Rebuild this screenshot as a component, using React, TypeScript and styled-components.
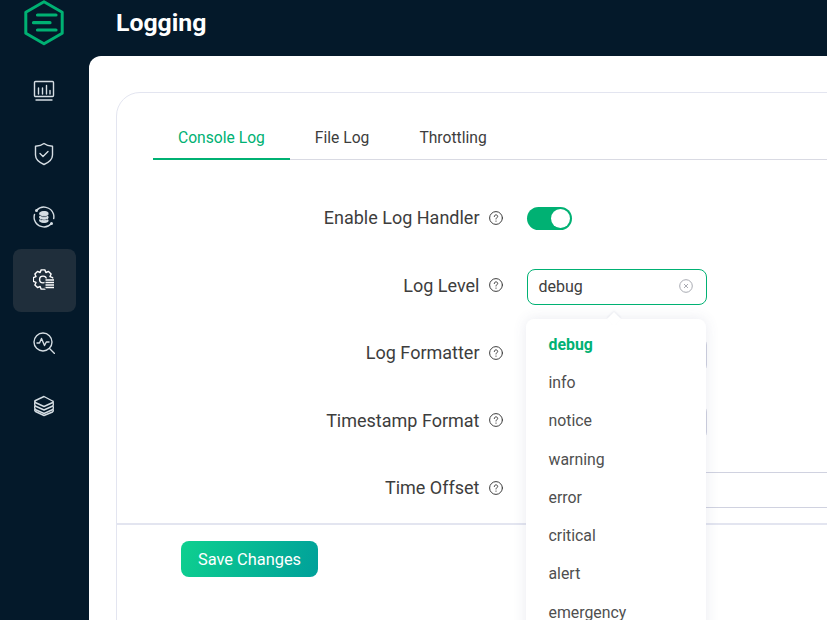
import React from 'react';
import styled, { createGlobalStyle } from 'styled-components';

const Global = createGlobalStyle`
  html, body { margin: 0; padding: 0; height: 620px; overflow: hidden; background: #04192a; }
  body { font-family: Roboto, "Liberation Sans", sans-serif; }
  #root { height: 620px; }
  * { box-sizing: border-box; }
`;

const Shell = styled.div`
  display: flex;
  width: 827px;
  height: 620px;
  overflow: hidden;
  background: #04192a;
`;

const Sidebar = styled.nav`
  width: 89px;
  flex: none;
  display: flex;
  flex-direction: column;
  align-items: center;
`;

const LogoWrap = styled.div`
  height: 49px;
  margin-bottom: 10px;
  display: flex;
  align-items: flex-start;
  justify-content: center;
`;

const NavItem = styled.div<{ $active?: boolean }>`
  width: 63px;
  height: 63px;
  margin-bottom: 0.2px;
  padding-right: 1px;
  border-radius: 8px;
  display: flex;
  align-items: center;
  justify-content: center;
  background: ${p => (p.$active ? '#1f2e3b' : 'transparent')};
  color: ${p => (p.$active ? '#ffffff' : '#d5dde3')};
`;

const Main = styled.main`
  flex: 1;
  min-width: 0;
  display: flex;
  flex-direction: column;
`;

const Header = styled.header`
  height: 56px;
  flex: none;
  padding: 8px 0 0 27px;
`;

const Title = styled.h1`
  margin: 0;
  font-size: 24.8px;
  line-height: 30px;
  font-weight: 700;
  color: #fff;
`;

const Content = styled.div`
  flex: 1;
  background: #fff;
  border-top-left-radius: 12px;
  padding: 36px 0 0 27px;
  min-width: 0;
`;

const Card = styled.section`
  width: 800px;
  height: 600px;
  border: 1px solid #e3e5f0;
  border-radius: 24px 0 0 0;
  position: relative;
`;

const TabBar = styled.div`
  display: flex;
  margin: 20px 0 0 36px;
  height: 47px;
  border-bottom: 1px solid #d9dae3;
  font-size: 15.65px;
`;

const Tab = styled.div<{ $active?: boolean }>`
  padding: 4px 25px 0;
  height: 47px;
  display: flex;
  align-items: center;
  color: ${p => (p.$active ? '#00b173' : '#3d3d3d')};
  border-bottom: 2px solid ${p => (p.$active ? '#00b173' : 'transparent')};
`;

const Form = styled.div`
  height: 365px;
  padding-top: 24px;
  display: flex;
  flex-direction: column;
  border-bottom: 2px solid #e3e5f0;
`;

const Row = styled.div`
  height: 67.5px;
  display: flex;
  align-items: center;
  flex: none;
`;

const Label = styled.label`
  width: 362.5px;
  text-align: right;
  font-size: 18px;
  color: #3d3d3d;
  flex: none;
`;

const Help = styled.span`
  width: 47px;
  flex: none;
  display: flex;
  padding-left: 9px;
  color: #3d3d3d;
`;

const Toggle = styled.div`
  width: 45px;
  height: 23px;
  margin-top: 2px;
  border-radius: 12px;
  background: #00b173;
  position: relative;
`;

const Knob = styled.span`
  position: absolute;
  right: 2px;
  top: 2px;
  width: 19px;
  height: 19px;
  border-radius: 50%;
  background: #fff;
`;

const Select = styled.div<{ $focus?: boolean }>`
  width: 180px;
  height: 36px;
  margin-top: 4px;
  border: 1px solid ${p => (p.$focus ? '#00b173' : '#d0d2e0')};
  border-radius: 8px;
  display: flex;
  align-items: center;
  justify-content: space-between;
  padding: 0 13px 2px 11px;
  font-size: 16px;
  color: #3d3d3d;
  background: #fff;
`;

const OffsetInput = styled.div`
  flex: 1;
  height: 36px;
  margin-top: 4px;
  border-top: 1px solid #d0d2e0;
  border-bottom: 1px solid #d0d2e0;
`;

const Footer = styled.div`
  padding: 16px 0 0 64px;
`;

const SaveButton = styled.button`
  width: 137px;
  height: 36px;
  border: 0;
  border-radius: 8px;
  background: linear-gradient(110deg, #0ed08f 0%, #00a09a 100%);
  color: #fff;
  font: 400 16.4px Roboto, "Liberation Sans", sans-serif;
  padding: 0;
`;

const Dropdown = styled.div`
  position: absolute;
  left: 409px;
  top: 226px;
  width: 180px;
  height: 320px;
  background: #fff;
  border-radius: 8px;
  box-shadow: 0 0 14px rgba(70, 80, 130, 0.12);
  padding: 6px 0;
`;

const Arrow = styled.span`
  position: absolute;
  left: 83px;
  top: -5px;
  width: 10px;
  height: 10px;
  background: #fff;
  transform: rotate(45deg);
  box-shadow: -1px -1px 2px rgba(70, 80, 130, 0.08);
`;

const Option = styled.div<{ $selected?: boolean }>`
  height: 38.3px;
  display: flex;
  align-items: center;
  padding-left: 22.5px;
  font-size: 15.85px;
  font-weight: ${p => (p.$selected ? 700 : 400)};
  color: ${p => (p.$selected ? '#00b173' : '#4f4f4f')};
`;

const ic = { fill: 'none', stroke: 'currentColor', strokeWidth: 1.4, strokeLinecap: 'round', strokeLinejoin: 'round' } as const;

const Logo = () => (
  <svg width="42" height="46" viewBox="0 0 42 46" fill="none" stroke="#00b173">
    <path d="M20 1.8 38.2 12.2v21L20 43.800 1.800 33.200v-21Z" strokeWidth="3" strokeLinejoin="round" />
    <path d="M13.500 15h18.500M9.500 22.700h16.500M13.500 30h18.500" strokeWidth="3.200" strokeLinecap="round" />
  </svg>
);

const MonitorIcon = () => (
  <svg width="22" height="22" viewBox="0 0 22 22" {...ic}>
    <rect x="1.500" y="1.500" width="19" height="15" rx="1" />
    <path d="M3 20h16M5.500 14V8M9.500 14V8M13.500 14V5.500M17 14v-3.500" />
  </svg>
);

const ShieldIcon = () => (
  <svg width="22" height="24" viewBox="0 0 22 24" {...ic}>
    <path d="M11 1.500c2 1.600 5 2.500 8.500 2.800v8.700c0 4.500-4 7.500-8.500 9.500C6.500 20.500 2.500 17.500 2.500 13V4.300C6 4 9 3.100 11 1.500Z" />
    <path d="m7 11.500 3 3 5-5" />
  </svg>
);

const SyncIcon = () => (
  <svg width="22" height="22" viewBox="0 0 22 22" {...ic}>
    <path d="M3.500 4.500A10 10 0 0 1 20.500 8M18.500 17.500A10 10 0 0 1 1.500 14M1.500 8.500A10 10 0 0 0 1.500 14M20.500 8a10 10 0 0 1 .2 4.500" />
    <path d="M3.500 4.500v.100M18.500 17.500v.100" strokeWidth="3" />
    <path d="M7 6.500c2-1.400 6-1.400 8 0v2.300c-2 1.300-6 1.300-8 0ZM7 10.300c2 1.300 6 1.300 8 0v2c-2 1.300-6 1.300-8 0ZM7 13.800c2 1.300 6 1.300 8 0v1.700c-2 1.300-6 1.300-8 0Z" fill="currentColor" strokeWidth="1" />
  </svg>
);

const gearPath = (() => {
  const pts: string[] = [];
  const teeth = 8;
  for (let i = 0; i < teeth; i++) {
    const a = (i / teeth) * Math.PI * 2 - Math.PI / 2;
    const step = (Math.PI * 2) / teeth;
    [
      [7.6, -0.5],
      [9.8, -0.24],
      [9.8, 0.24],
      [7.6, 0.5],
    ].forEach(([r, f]) => {
      const t = a + f * step;
      pts.push(`${(10 + r * Math.cos(t)).toFixed(2)} ${(10.5 + r * Math.sin(t)).toFixed(2)}`);
    });
  }
  return `M${pts.join('L')}Z`;
})();

const GearIcon = () => (
  <svg width="22" height="22" viewBox="0 0 22 22" {...ic}>
    <path d={gearPath} />
    <circle cx="10" cy="10.500" r="3.400" />
    <rect x="11.500" y="9.500" width="10" height="10.500" fill="#1f2e3b" stroke="none" />
    <path d="M12.500 11h8.500M12.500 13.500h8.500M12.500 16h8.500M12.500 18.500h8.500" strokeWidth="1.500" strokeLinecap="butt" />
  </svg>
);

const SearchPulseIcon = () => (
  <svg width="22" height="22" viewBox="0 0 22 22" {...ic}>
    <circle cx="10" cy="10" r="9" />
    <path d="m16.500 16.500 5 5" />
    <path d="M4 11h2.500l2-4.500 3 7 1.800-3.500H16" />
  </svg>
);

const LayersIcon = () => (
  <svg width="22" height="22" viewBox="0 0 22 22" {...ic}>
    <path d="M11 1.500 19.500 6c1 .5 1 1 .3 1.500.7.500.7 3 0 3.500.7.500.7 3 0 3.500.7.500.7 1.800-.3 2.500L11 20.500 2.500 16.500c-1-.7-1-2-.3-2.500-.7-.5-.7-3 0-3.500-.7-.5-.7-3 0-3.500-.7-.5-.7-1 .3-1.500Z" />
    <path d="M2.200 7.500 11 11.500l8.800-4M2.200 11 11 15l8.800-4M2.200 14.500 11 18.500l8.800-4" />
  </svg>
);

const HelpIcon = () => (
  <svg width="14" height="14" viewBox="0 0 14 14" fill="none" stroke="currentColor" strokeWidth="1" strokeLinecap="round">
    <circle cx="7" cy="7" r="6.400" />
    <path d="M5.300 5.500c0-1 .8-1.600 1.700-1.600s1.700.6 1.700 1.500c0 1.200-1.700 1.300-1.700 2.600" />
    <path d="M7 10v.300" />
  </svg>
);

const ClearIcon = () => (
  <svg width="14" height="14" viewBox="0 0 14 14" fill="none" stroke="#a9abb3" strokeWidth="1">
    <circle cx="7" cy="7" r="6.300" />
    <path d="m5 5 4 4M9 5 5 9" />
  </svg>
);

const levels = ['debug', 'info', 'notice', 'warning', 'error', 'critical', 'alert', 'emergency'];

export default function App() {
  return (
    <Shell>
      <Global />
      <Sidebar>
        <LogoWrap><Logo /></LogoWrap>
        <NavItem><MonitorIcon /></NavItem>
        <NavItem><ShieldIcon /></NavItem>
        <NavItem><SyncIcon /></NavItem>
        <NavItem $active><GearIcon /></NavItem>
        <NavItem><SearchPulseIcon /></NavItem>
        <NavItem><LayersIcon /></NavItem>
      </Sidebar>
      <Main>
        <Header><Title>Logging</Title></Header>
        <Content>
          <Card>
            <TabBar>
              <Tab $active>Console Log</Tab>
              <Tab>File Log</Tab>
              <Tab>Throttling</Tab>
            </TabBar>
            <Form>
              <Row>
                <Label>Enable Log Handler</Label>
                <Help><HelpIcon /></Help>
                <Toggle><Knob /></Toggle>
              </Row>
              <Row>
                <Label>Log Level</Label>
                <Help><HelpIcon /></Help>
                <Select $focus>debug<ClearIcon /></Select>
              </Row>
              <Row>
                <Label>Log Formatter</Label>
                <Help><HelpIcon /></Help>
                <Select />
              </Row>
              <Row>
                <Label>Timestamp Format</Label>
                <Help><HelpIcon /></Help>
                <Select />
              </Row>
              <Row>
                <Label>Time Offset</Label>
                <Help><HelpIcon /></Help>
                <OffsetInput />
              </Row>
            </Form>
            <Footer><SaveButton>Save Changes</SaveButton></Footer>
            <Dropdown>
              <Arrow />
              {levels.map((l, i) => (
                <Option key={l} $selected={i === 0}>{l}</Option>
              ))}
            </Dropdown>
          </Card>
        </Content>
      </Main>
    </Shell>
  );
}
